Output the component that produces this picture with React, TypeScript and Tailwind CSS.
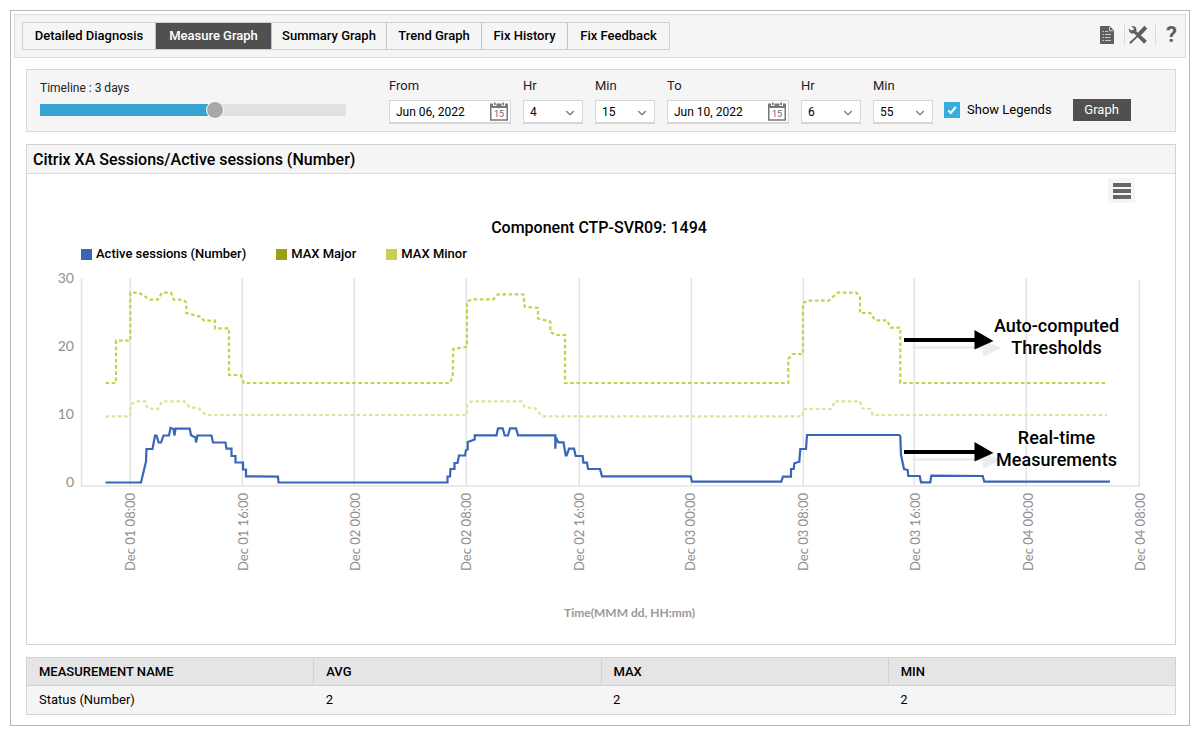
import { useState } from 'react';
import { ChevronDown } from 'lucide-react';

const tabs = [
  { name: 'Detailed Diagnosis', width: 'w-[133px]' },
  { name: 'Measure Graph', width: 'w-[116px]' },
  { name: 'Summary Graph', width: 'w-[115px]' },
  { name: 'Trend Graph', width: 'w-[95px]' },
  { name: 'Fix History', width: 'w-[86px]' },
  { name: 'Fix Feedback', width: 'w-[101px]' },
];

const legend = [
  { name: 'Active sessions (Number)', color: 'bg-[#3866b8]' },
  { name: 'MAX Major', color: 'bg-[#9c9f14]' },
  { name: 'MAX Minor', color: 'bg-[#c9cf54]' },
];

const gridLines = [130, 242, 354, 466, 579, 691, 803, 914, 1026, 1139];

const timeLabels = [
  { x: 135, text: 'Dec 01 08:00' },
  { x: 248, text: 'Dec 01 16:00' },
  { x: 360, text: 'Dec 02 00:00' },
  { x: 471, text: 'Dec 02 08:00' },
  { x: 584, text: 'Dec 02 16:00' },
  { x: 695, text: 'Dec 03 00:00' },
  { x: 808, text: 'Dec 03 08:00' },
  { x: 920, text: 'Dec 03 16:00' },
  { x: 1033, text: 'Dec 04 00:00' },
  { x: 1145, text: 'Dec 04 08:00' },
];

const valueLabels = [
  { y: 283, text: '30' },
  { y: 351, text: '20' },
  { y: 419, text: '10' },
  { y: 487, text: '0' },
];

const majorSeries =
  '105.5,383 116,383 116,340.7 130.3,340.7 130.3,292.7 139,292.7 150,299.7 158,299.7 162,292.7 171,292.7 173.7,299.7 183,299.7 186.3,302.5 186.3,313 200.7,316.7 204,320.7 215,320.7 215,328.3 229,328.3 229,375 240.7,375 243.7,383 450,383 452.7,376 453.3,349 467,346.7 467,301.7 471.7,299.3 493.3,299.3 498,294.3 523.3,294.3 524.7,306.7 538,308 538,318.3 550.3,321.7 550.3,332 555.7,335 565,335 565,383 788.3,383 788.3,359 792.7,354 803,354 803,303.3 806.7,300.7 828.7,300.7 837.7,292.7 856.3,292.7 860,296.7 860,313 870.3,313 875,320.3 887.3,320.3 890.3,327.7 900.3,327.7 900.3,383 1107,383';

const minorSeries =
  '105.5,416.3 130.3,416.3 130.7,404.3 136.7,401.3 145.3,401.3 147.5,408.5 158,409 162.3,401.3 184.3,401.3 190,407.7 198,407.7 205.7,415 467,415 467,405 471.3,401.3 521.7,401.3 525,407.3 535,408.3 542.3,416.3 802.5,416.3 803,410 806,409 831.3,409 834.7,401.3 860,401.3 862,408.3 870.7,409 872.7,415 1107,415';

const sessionSeries =
  '105.5,482.5 141,482.5 146,461.5 146.5,449 152.5,449 155,435.5 156.5,435.5 158.7,442.5 161,442.5 163.5,435.5 169,435.5 170.5,428 173.5,429 174.5,435.5 175.5,428.7 189.7,428.5 191,435.3 195.5,437.5 196,442.5 197.5,435.5 211.5,435.5 213,442.5 225.5,442.5 226.5,448.7 231.5,448.7 231.5,456 235.5,456 235.5,462.5 243,462.5 243,469.5 246,469.5 246,476.3 278,476.7 278.5,482.5 447.5,482.5 447.5,476.5 450,476.5 450.5,469 454.5,469 454.5,463 457.5,463 459,455.5 465,455.5 466,450 467.7,449.5 467.7,442 474.7,439.5 474.7,435.3 496.5,435.3 498,428.3 502.7,428.3 504.7,435.5 508,435.5 510,428.3 516,428.3 518,435.3 555.3,435.3 555.3,448.7 556,438 558.5,442.3 563.5,442.3 565.7,455.3 566.7,455.3 569,448.7 574,448.7 575.7,456 582.7,456 583.3,462.7 587,462.7 588,469 600,469 602,476.3 690.7,476.3 692,481.7 781.3,481.7 783,476.7 791,476.7 791,469 793.7,469 794.3,463.3 799.3,461.7 800.3,449 806,449 807,435 899,435 900.3,436.3 901,455 904,469 907.7,470 908.3,476 919.7,476 921,482.3 930.3,482.3 931.3,475.7 982.7,476 984.3,481.7 1110,481.7';

function ReportIcon() {
  return (
    <svg width="14" height="18" viewBox="0 0 14 18" aria-hidden="true">
      <path d="M0 0H9.5L14 4.5V18H0Z" fill="#5f5f5f" />
      <path d="M9.5 1V4.8H13" fill="none" stroke="#d0d0d0" strokeWidth="1" />
      <path d="M2.5 5.5H4M2.5 8.5H4M2.5 11.5H4M2.5 14.5H4M5 5.5H8M5 8.5H11M5 11.5H10M5 14.5H11" stroke="#c9c9c9" strokeWidth="1" />
    </svg>
  );
}

function ToolsIcon() {
  return (
    <svg width="20" height="20" viewBox="0 0 20 20" aria-hidden="true" fill="#5f5f5f">
      <path d="M19.3 3.6 16.4 0.8 10.4 7 9.3 10 1.2 17.4 2.6 18.9 10.6 11.3 13.2 10Z" />
      <path d="M3.3 1.2C5.6 0.4 8.2 1.7 8.5 4.2L8.3 6.2 18.9 15.8 16 18.8 6.2 8.5C3.5 9 1.1 7.6 0.8 4.7L0.9 3.4 3.2 5.6 5.4 5.1 5.9 3.2Z" />
    </svg>
  );
}

function CalendarIcon() {
  return (
    <svg width="18" height="19" viewBox="0 0 18 19" aria-hidden="true">
      <rect x="0.75" y="3" width="16.5" height="15" fill="#fff" stroke="#777" strokeWidth="1.5" />
      <path d="M0 1.5H18V6H0Z" fill="#777" />
      <path d="M3 0H6.5V4H3ZM11.5 0H15V4H11.5Z" fill="#fff" />
      <path d="M4 0.5H5.6V3.3H4ZM12.4 0.5H14V3.3H12.4Z" fill="#777" />
      <text x="9" y="15" textAnchor="middle" fontSize="9" fill="#666">15</text>
    </svg>
  );
}

function DateField({ id, label, value }: { id: string; label: string; value: string }) {
  return (
    <div className="flex w-[122px] flex-col gap-1.5">
      <label htmlFor={id} className="text-[13px] leading-4 text-[#222]">{label}</label>
      <div className="flex h-6 items-center border border-b-2 border-[#d6d6d6] bg-white pr-0.5 pl-1.5">
        <input id={id} type="text" defaultValue={value} className="w-0 flex-1 bg-transparent text-[12px] leading-4 text-black outline-none" />
        <button type="button" aria-label={`Pick ${label} date`}><CalendarIcon /></button>
      </div>
    </div>
  );
}

function SelectField({ id, label, value }: { id: string; label: string; value: string }) {
  return (
    <div className="flex w-[60px] flex-col gap-1.5">
      <label htmlFor={id} className="text-[13px] leading-4 text-[#222]">{label}</label>
      <div className="relative h-6">
        <select id={id} defaultValue={value} className="block h-6 w-full appearance-none border border-b-2 border-[#d6d6d6] bg-white pl-1.5 text-[12px] leading-4 text-black outline-none">
          <option>{value}</option>
        </select>
        <ChevronDown size={14} strokeWidth={2} color="#777" className="pointer-events-none absolute top-[6px] right-[6px]" />
      </div>
    </div>
  );
}

function Arrow({ y }: { y: number }) {
  return (
    <g>
      <path d={`M912.5 ${y + 6}H983V${y + 0.5}L1002 ${y + 8}L983 ${y + 16.5}V${y + 9}H912.5Z`} fill="#ededed" />
      <path d={`M904 ${y - 2}H974.5V${y - 10}L993.5 ${y + 1}L974.5 ${y + 9.5}V${y + 2}H904Z`} fill="#000" />
    </g>
  );
}

function SessionsChart() {
  return (
    <svg viewBox="27 262 1148 318" className="block w-full" role="img" aria-label="Active sessions over time">
      <g stroke="#e3e3e3" strokeWidth="1.5" fill="none">
        <path d="M81.5 278V486H1139.5" />
        {gridLines.map((x) => (
          <path key={x} d={`M${x + 0.3} ${x === 1139 ? 280 : 278}V486`} />
        ))}
      </g>
      <g fill="#8f8f8f" fontSize="13" className="font-['Lato',sans-serif]">
        {valueLabels.map((l) => (
          <text key={l.text} x="74" y={l.y} textAnchor="end" fontSize="14">{l.text}</text>
        ))}
        {timeLabels.map((l) => (
          <text key={l.text} transform={`translate(${l.x} 571) rotate(-90)`}>{l.text}</text>
        ))}
      </g>
      <g fill="none" strokeWidth="2.2">
        <polyline points={minorSeries} stroke="#dfe29a" strokeDasharray="3.6 2.6" />
        <polyline points={majorSeries} stroke="#c8cf4a" strokeDasharray="3.6 2.6" />
        <polyline points={sessionSeries} stroke="#3866b8" />
      </g>
      <Arrow y={340} />
      <Arrow y={452} />
      <g fill="#000" fontSize="18" fontWeight="500" textAnchor="middle">
        <text x="1056.5" y="332">Auto-computed</text>
        <text x="1056.5" y="354">Thresholds</text>
        <text x="1056.5" y="444">Real-time</text>
        <text x="1056.5" y="466">Measurements</text>
      </g>
    </svg>
  );
}

export default function App() {
  const [tab, setTab] = useState('Measure Graph');
  const [hours, setHours] = useState(72);
  const fill = (hours / 125) * 100;

  return (
    <div className="bg-white p-2.5 font-['Roboto',sans-serif] text-black">
      <div className="border border-[#b8b8b8] p-[3px] pb-2.5">
        <header className="flex h-11 items-center justify-between border border-[#dadada] bg-[#f5f5f5] pr-2 pl-[7px]">
          <nav className="flex h-7 border border-[#cfcfcf]">
            {tabs.map((t, i) => (
              <button
                key={t.name}
                type="button"
                onClick={() => setTab(t.name)}
                className={`${t.width} text-[13px] font-medium whitespace-nowrap ${i < tabs.length - 1 ? 'border-r border-[#c4c4c4]' : ''} ${
                  tab === t.name ? 'bg-[#505050] text-white' : 'text-black'
                }`}
              >
                {t.name}
              </button>
            ))}
          </nav>
          <div className="flex items-center pb-0.5">
            <button type="button" aria-label="Report" className="pr-2.5"><ReportIcon /></button>
            <button type="button" aria-label="Settings" className="border-x border-[#d8d8d8] pr-[7px] pl-[3px]"><ToolsIcon /></button>
            <button type="button" aria-label="Help" className="pl-2.5 text-[22px] leading-5 font-bold text-[#5f5f5f]">?</button>
          </div>
        </header>

        <main className="mt-[11px] mr-2.5 ml-3 flex flex-col gap-3">
          <section className="flex items-start border border-[#d9d9d9] bg-[#f5f5f5] px-[13px] pt-2 pb-[7px]">
            <div className="mt-0.5 mr-[43px] flex w-[306px] flex-col gap-[5px]">
              <label htmlFor="timeline" className="text-[12px] leading-4 text-[#222]">Timeline : 3 days</label>
              <input
                id="timeline"
                type="range"
                min={0}
                max={125}
                value={hours}
                onChange={(e) => setHours(Number(e.target.value))}
                style={{ backgroundImage: `linear-gradient(to right, #36a3d1 ${fill}%, #e1e1e1 ${fill}%)` }}
                className="my-[3px] h-3 w-full appearance-none outline-none [&::-webkit-slider-thumb]:size-[18px] [&::-webkit-slider-thumb]:appearance-none [&::-webkit-slider-thumb]:rounded-full [&::-webkit-slider-thumb]:border [&::-webkit-slider-thumb]:border-white [&::-webkit-slider-thumb]:bg-[#a8a8a8]"
              />
            </div>
            <div className="flex gap-3">
              <DateField id="from" label="From" value="Jun 06, 2022" />
              <SelectField id="from-hr" label="Hr" value="4" />
              <SelectField id="from-min" label="Min" value="15" />
              <DateField id="to" label="To" value="Jun 10, 2022" />
              <SelectField id="to-hr" label="Hr" value="6" />
              <SelectField id="to-min" label="Min" value="55" />
            </div>
            <div className="mt-[21px] ml-[11px] flex items-center">
              <span className="relative size-4">
                <input id="legends" type="checkbox" defaultChecked className="peer block size-4 appearance-none bg-white checked:bg-[#38addc]" />
                <svg viewBox="0 0 16 16" className="pointer-events-none absolute inset-0 hidden size-4 peer-checked:block" aria-hidden="true">
                  <path d="M4.2 8.5 6.8 11 11.8 5" fill="none" stroke="#fff" strokeWidth="2" />
                </svg>
              </span>
              <label htmlFor="legends" className="ml-[7px] text-[13px] leading-4 text-black">Show Legends</label>
              <button type="button" className="ml-[21px] h-[22px] w-[58px] bg-[#505050] text-[13px] leading-4 text-white">Graph</button>
            </div>
          </section>

          <section className="border border-[#d3d3d3] bg-white">
            <h1 className="border-b border-[#d9d9d9] bg-[#f5f5f5] px-1.5 pt-1 pb-0.5 text-[16px] leading-[22px] font-medium">
              Citrix XA Sessions/Active sessions (Number)
            </h1>
            <div className="flex justify-end pt-1 pr-10">
              <button type="button" aria-label="Chart menu" className="flex h-[25px] w-[27px] flex-col items-center justify-center gap-0.5 bg-[#f5f5f5]">
                <span className="h-1 w-[18px] bg-[#666]" />
                <span className="h-1 w-[18px] bg-[#666]" />
                <span className="h-1 w-[18px] bg-[#666]" />
              </button>
            </div>
            <h2 className="mt-[13px] pr-1 text-center text-[16px] leading-6 font-medium">Component CTP-SVR09: 1494</h2>
            <ul className="mt-1.5 flex gap-[30px] pl-[54px]">
              {legend.map((l) => (
                <li key={l.name} className="flex items-center gap-1 text-[13px] leading-4 font-medium">
                  <span className={`size-[11px] ${l.color}`} />
                  {l.name}
                </li>
              ))}
            </ul>
            <SessionsChart />
            <p className="mt-[25px] mb-[23px] pl-[57px] text-center font-['Lato',sans-serif] text-[12px] leading-4 font-bold text-[#999]">Time(MMM dd, HH:mm)</p>
          </section>

          <table className="w-full table-fixed border-collapse border border-[#d3d3d3] text-left text-[13px] leading-4">
            <thead className="bg-[#e5e5e5]">
              <tr className="h-7">
                {['MEASUREMENT NAME', 'AVG', 'MAX', 'MIN'].map((h) => (
                  <th key={h} scope="col" className="border border-[#d3d3d3] px-3 font-medium">{h}</th>
                ))}
              </tr>
            </thead>
            <tbody className="bg-[#f5f5f5]">
              <tr className="h-[29px]">
                <td className="px-3">Status (Number)</td>
                <td className="px-3">2</td>
                <td className="px-3">2</td>
                <td className="px-3">2</td>
              </tr>
            </tbody>
          </table>
        </main>
      </div>
    </div>
  );
}
